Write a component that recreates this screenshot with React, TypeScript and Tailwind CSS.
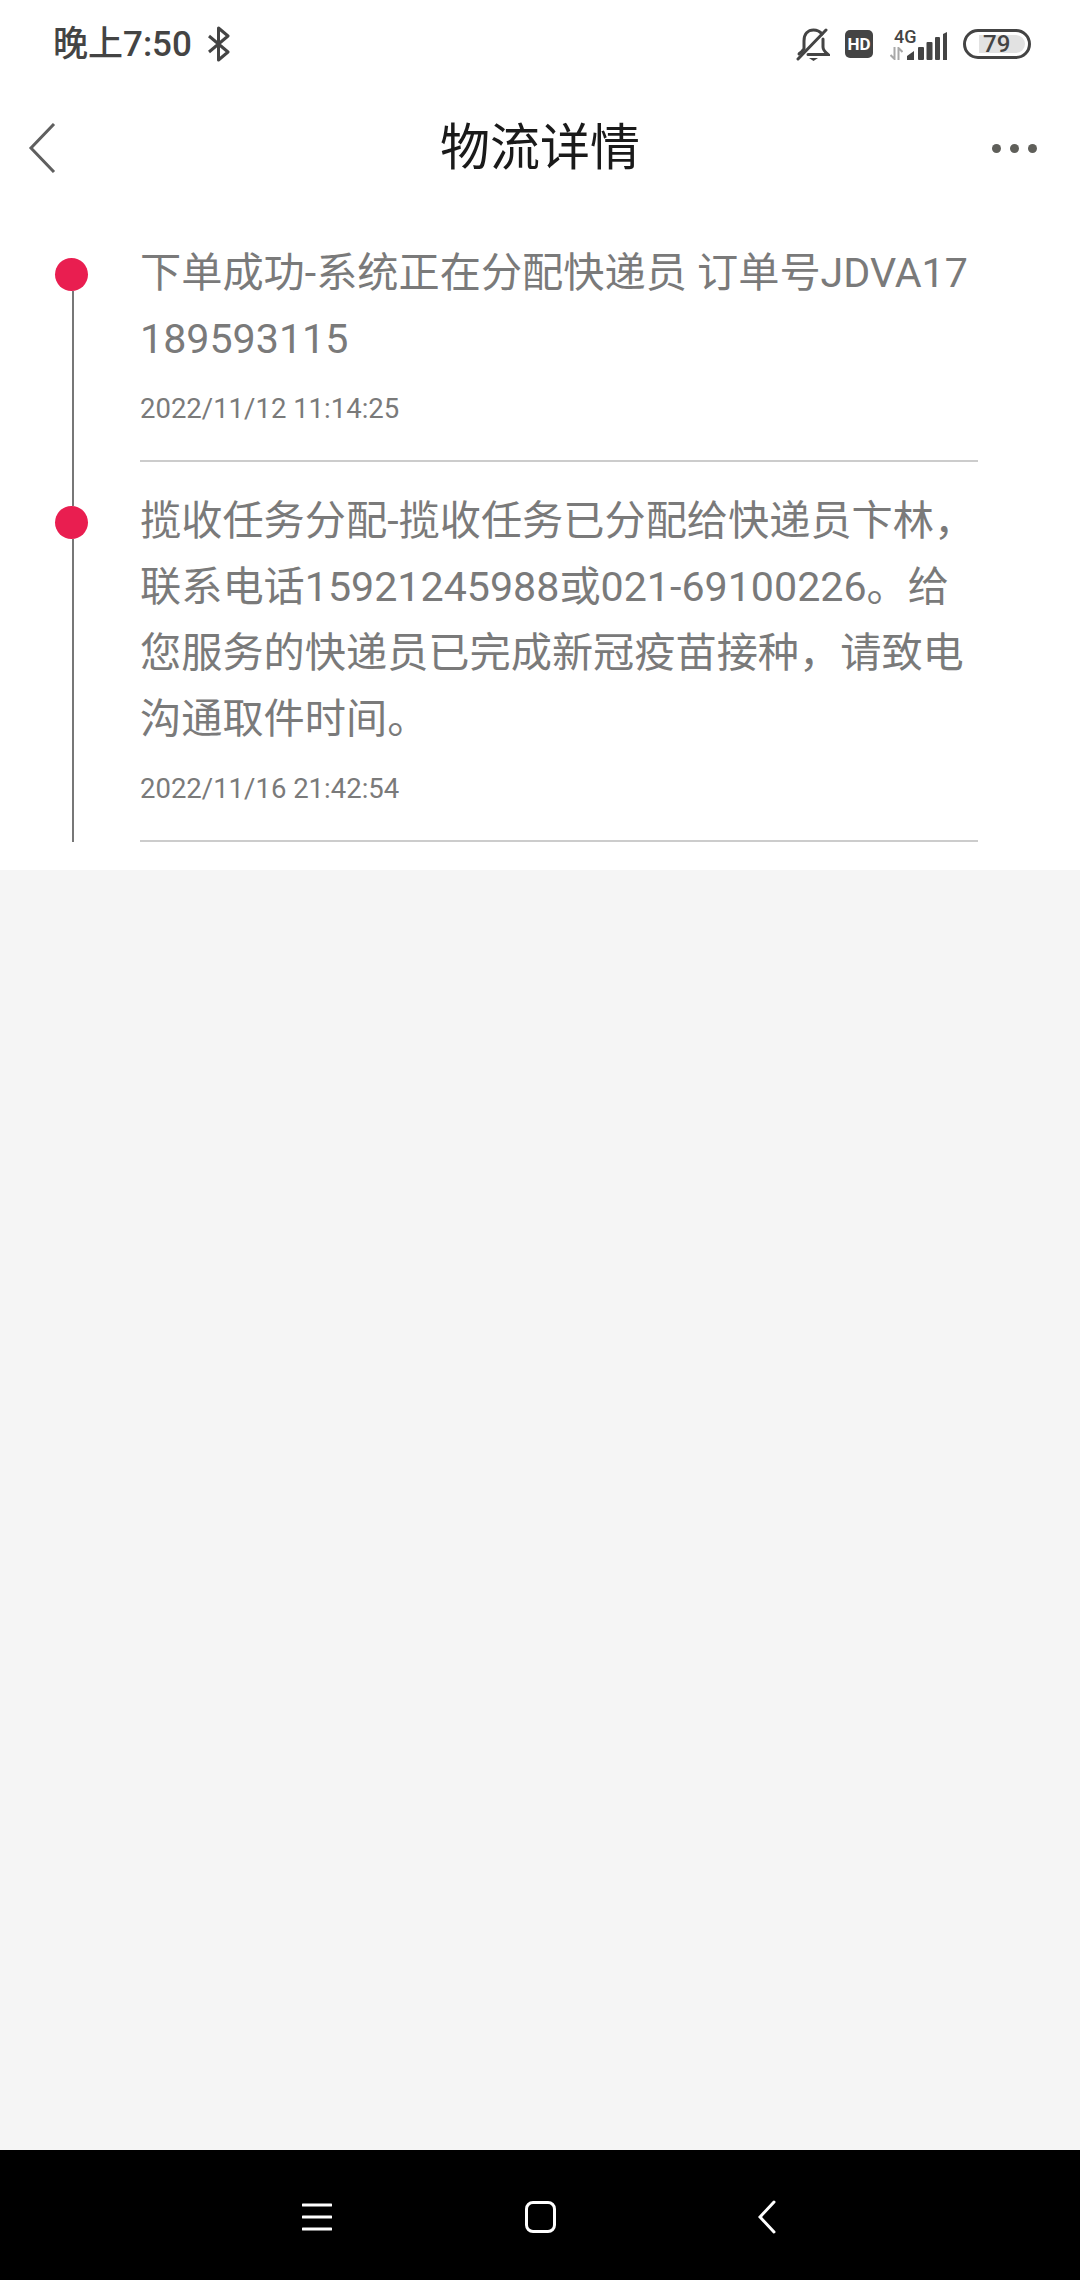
const font = { fontFamily: 'Roboto, "Noto Sans CJK SC", sans-serif' };

const records = [
    {
        lines: ["下单成功-系统正在分配快递员 订单号JDVA17", "189593115"],
        time: "2022/11/12 11:14:25",
    },
    {
        lines: [
            "揽收任务分配-揽收任务已分配给快递员卞林，",
            "联系电话15921245988或021-69100226。给",
            "您服务的快递员已完成新冠疫苗接种，请致电",
            "沟通取件时间。",
        ],
        time: "2022/11/16 21:42:54",
    },
];

function BluetoothIcon() {
    return (
        <svg width="24" height="36" viewBox="0 0 24 36" fill="none" stroke="#444" strokeWidth="3" strokeLinejoin="round">
            <path d="M2 10 L21 26 L11.5 34 V2 L21 10 L2 26" />
        </svg>
    );
}

function BellOffIcon() {
    return (
        <svg width="34" height="34" viewBox="0 0 34 34" fill="none" stroke="#444" strokeWidth="3" strokeLinecap="round">
            <path d="M8 22 V14 C8 7 12 3 17.5 3 C21 3 24 4.5 26 7" />
            <path d="M27 12 V20 C27 23 29 25 32 27.5 H12" />
            <path d="M7 23 C6 25 4 26 3 27" />
            <path d="M2 32 L30 3" />
            <path d="M13 31 H22 L17.5 34 Z" fill="#444" stroke="none" />
        </svg>
    );
}

function SignalIcon() {
    return (
        <svg width="40" height="28" viewBox="0 0 40 28">
            <path d="M0 28 V24 L7 19 V28 Z" fill="#444" />
            <rect x="11" y="15" width="6" height="13" rx="1" fill="#444" />
            <rect x="19.5" y="10" width="6" height="18" rx="1" fill="#444" />
            <rect x="28" y="5" width="5" height="23" rx="1" fill="#444" />
            <path d="M36 2 L40 0 V28 H36 Z" fill="#444" />
        </svg>
    );
}

function ArrowsIcon() {
    return (
        <svg width="13" height="13" viewBox="0 0 13 13" fill="none" stroke="#a8a8a8" strokeWidth="2">
            <path d="M4.5 0 V12 L0.5 8" />
            <path d="M8.5 13 V1 L12.5 5" />
        </svg>
    );
}

export default function App() {
    return (
        <div className="w-[1080px] h-[2280px] flex flex-col bg-[#f5f5f5]" style={font}>
            <div className="bg-white">
                {/* status bar */}
                <div className="h-[88px] flex items-center justify-between pl-[53px] pr-[49px] text-[#444]">
                    <div className="flex items-center gap-[15px]">
                        <span className="text-[35px] font-medium leading-none">晚上7:50</span>
                        <BluetoothIcon />
                    </div>
                    <div className="flex items-center">
                        <BellOffIcon />
                        <div className="ml-[15px] w-[28px] h-[28px] rounded-[5px] bg-[#444] text-white text-[17px] font-bold leading-[28px] text-center">
                            HD
                        </div>
                        <div className="ml-[17px] w-[17px] flex flex-col items-start">
                            <span className="text-[18px] font-medium leading-[17px] ml-[4px] mb-[2px]">4G</span>
                            <ArrowsIcon />
                        </div>
                        <div className="self-end mb-[1px]">
                            <SignalIcon />
                        </div>
                        <div className="ml-[16px] w-[68px] h-[30px] rounded-full border-[3px] border-[#444] flex items-center justify-end pr-[3px]">
                            <div className="w-[46px] h-[18px] rounded-r-full bg-[#e2e2e2] text-[24px] font-medium leading-[18px] pl-[4px]">
                                79
                            </div>
                        </div>
                    </div>
                </div>

                {/* title bar */}
                <div className="h-[120px] grid grid-cols-[1fr_auto_1fr] items-center px-[43px]">
                    <svg className="-ml-[15px]" width="28" height="50" viewBox="0 0 28 50" fill="none" stroke="#5f5f5f" strokeWidth="3">
                        <path d="M26 1 L3 25 L26 49" />
                    </svg>
                    <h1 className="text-[50px] leading-none font-normal text-[#1a1a1a]">物流详情</h1>
                    <div className="flex gap-[9px] justify-end">
                        <span className="w-[9px] h-[9px] rounded-full bg-[#5f5f5a]" />
                        <span className="w-[9px] h-[9px] rounded-full bg-[#5f5f5a]" />
                        <span className="w-[9px] h-[9px] rounded-full bg-[#5f5f5a]" />
                    </div>
                </div>

                {/* logistics records */}
                <div className="pt-[6px] pb-[28px]">
                    {records.map((record, index) => (
                        <div key={index} className="flex">
                            <div className="w-[140px] pl-[55px] flex flex-col items-start">
                                <div className={index === 0 ? "h-[44px]" : "h-[44px] w-[2px] ml-[17px] bg-[#777]"} />
                                <div className="w-[33px] h-[33px] rounded-full bg-[#e91e50] shrink-0" />
                                <div className="flex-1 w-[2px] ml-[17px] bg-[#777]" />
                            </div>
                            <div className="w-[838px] pt-[26px] pb-[31px] border-b-2 border-[#cccccc]">
                                <p className="text-[41.2px] leading-[66px] text-[#7a7a7a] whitespace-nowrap">
                                    {record.lines.map((line) => (
                                        <span key={line} className="block">
                                            {line}
                                        </span>
                                    ))}
                                </p>
                                <p className="mt-[17px] text-[27.5px] leading-[40px] text-[#7a7a7a]">{record.time}</p>
                            </div>
                        </div>
                    ))}
                </div>
            </div>

            <div className="flex-1" />

            {/* navigation bar */}
            <div className="h-[130px] bg-black flex items-center pl-[302px] pt-[4px]">
                <svg width="30" height="28" viewBox="0 0 30 28" stroke="#fff" strokeWidth="3" strokeLinecap="round">
                    <path d="M1 2 H29 M1 14 H29 M1 26 H29" />
                </svg>
                <div className="ml-[193px] w-[31px] h-[32px] rounded-[8px] border-[3px] border-white" />
                <svg className="ml-[202px]" width="18" height="34" viewBox="0 0 18 34" fill="none" stroke="#fff" strokeWidth="3" strokeLinecap="round">
                    <path d="M16 2 L2 17 L16 32" />
                </svg>
            </div>
        </div>
    );
}
